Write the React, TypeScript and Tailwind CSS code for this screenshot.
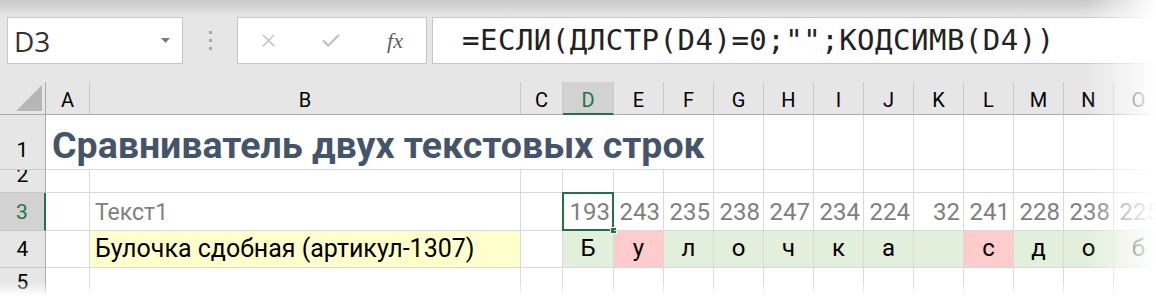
import { X, Check } from 'lucide-react'

const colHeads = [
  { l: 'A', w: 'w-[44px]' },
  { l: 'B', w: 'w-[431px]' },
  { l: 'C', w: 'w-[42px]' },
  { l: 'D', w: 'w-[51px]' },
  { l: 'E', w: 'w-[50px]' },
  { l: 'F', w: 'w-[50px]' },
  { l: 'G', w: 'w-[50px]' },
  { l: 'H', w: 'w-[50px]' },
  { l: 'I', w: 'w-[50px]' },
  { l: 'J', w: 'w-[50px]' },
  { l: 'K', w: 'w-[50px]' },
  { l: 'L', w: 'w-[50px]' },
  { l: 'M', w: 'w-[50px]' },
  { l: 'N', w: 'w-[50px]' },
  { l: 'O', w: 'w-[50px]' },
]

const codes = [193, 243, 235, 238, 247, 234, 224, 32, 241, 228, 238, 225]
const chars = ['Б', 'у', 'л', 'о', 'ч', 'к', 'а', ' ', 'с', 'д', 'о', 'б']
const bad = [1, 8]

const cell = 'shrink-0 border-r border-b border-[#d9d9d9] box-border'

function RowHead({ n, sel, h, pb }: { n: number; sel?: boolean; h: string; pb: string }) {
  return (
    <div
      className={`${h} w-[46px] shrink-0 box-border flex items-end justify-center overflow-hidden border-b border-[#c8c8c8] text-[21px] leading-none ${
        sel ? 'bg-[#d2d2d2] text-[#217346] border-r-2 border-r-[#217346]' : 'bg-[#e6e6e6] text-black border-r border-r-[#ababab]'
      }`}
    >
      <span className={pb}>{n}</span>
    </div>
  )
}

function Blank({ w, h }: { w: string; h: string }) {
  return <div className={`${cell} ${w} ${h}`} />
}

export default function App() {
  return (
    <div className="relative w-[1156px] h-[296px] overflow-hidden bg-[#e6e6e6] font-['Roboto',sans-serif]">
      {/* formula bar */}
      <div className="h-[82px] bg-gradient-to-b from-[#c9c9c9] via-[#e6e6e6] via-[20%] to-[#e6e6e6] pt-[17px] pl-[7px] flex items-start">
        <div className="w-[176px] h-[47px] bg-white border border-[#c6c6c6] flex items-center justify-between pl-[6px] pr-[12px]">
          <span className="text-[28px] text-[#333] font-['Open_Sans',sans-serif] leading-none">D3</span>
          <svg width="9" height="5" viewBox="0 0 9 5">
            <polygon points="0,0 9,0 4.5,5" fill="#7a7a7a" />
          </svg>
        </div>
        <div className="w-[54px] h-[47px] flex flex-col items-center justify-center gap-[5px]">
          <div className="w-[3px] h-[3px] bg-[#a8a8a8]" />
          <div className="w-[3px] h-[3px] bg-[#a8a8a8]" />
          <div className="w-[3px] h-[3px] bg-[#a8a8a8]" />
        </div>
        <div className="w-[190px] h-[47px] bg-white border border-[#c6c6c6] flex items-center">
          <div className="w-[60px] flex justify-center">
            <X size={21} strokeWidth={1.5} className="text-[#bdbdbd]" />
          </div>
          <div className="w-[66px] flex justify-center">
            <Check size={22} strokeWidth={2.6} className="text-[#c4c4c4]" />
          </div>
          <div className="w-[62px] flex justify-center">
            <span className="font-['Liberation_Serif',serif] italic text-[22px] text-[#5f5f5f] leading-none">fx</span>
          </div>
        </div>
        <div className="ml-[5px] flex-1 h-[47px] bg-white border border-[#c6c6c6] border-r-0 flex items-center pl-[29px]">
          <span className="font-['DejaVu_Sans_Mono',monospace] text-[29px] tracking-[0.5px] text-[#222] leading-none">
            =ЕСЛИ(ДЛСТР(D4)=0;"";КОДСИМВ(D4))
          </span>
        </div>
      </div>

      {/* sheet */}
      <div className="bg-white">
        {/* column headers */}
        <div className="flex h-[33px]">
          <div className="w-[46px] shrink-0 box-border bg-[#e6e6e6] border-r border-b border-[#ababab] flex items-end justify-end pr-[3px] pb-[3px]">
            <svg width="26" height="26" viewBox="0 0 26 26">
              <polygon points="26,0 26,26 0,26" fill="#b6b6b6" />
            </svg>
          </div>
          {colHeads.map((c) => (
            <div
              key={c.l}
              className={`${c.w} shrink-0 box-border flex items-center justify-center pt-[4px] text-[20px] leading-none border-r border-[#c8c8c8] ${
                c.l === 'D'
                  ? 'bg-[#d2d2d2] text-[#217346] border-b-2 border-b-[#217346]'
                  : 'bg-[#e6e6e6] text-black border-b border-b-[#ababab]'
              }`}
            >
              {c.l}
            </div>
          ))}
        </div>

        {/* row 1: title spills over A–F, so no gridlines there */}
        <div className="flex h-[55px]">
          <RowHead n={1} h="h-[55px]" pb="pb-[8px]" />
          <div className={`${cell} w-[668px] h-[55px] flex items-end pl-[6px] pb-[5px]`}>
            <span className="whitespace-nowrap font-bold text-[37.5px] leading-none text-[#44546a]">
              Сравниватель двух текстовых строк
            </span>
          </div>
          {colHeads.slice(6).map((c) => (
            <Blank key={c.l} w={c.w} h="h-[55px]" />
          ))}
        </div>

        {/* row 2 */}
        <div className="flex h-[23px]">
          <RowHead n={2} h="h-[23px]" pb="pb-[6px]" />
          {colHeads.map((c) => (
            <Blank key={c.l} w={c.w} h="h-[23px]" />
          ))}
        </div>

        {/* row 3 */}
        <div className="flex h-[38px]">
          <RowHead n={3} sel h="h-[38px]" pb="pb-[7px]" />
          <Blank w="w-[44px]" h="h-[38px]" />
          <div className={`${cell} w-[431px] h-[38px] flex items-end pl-[5px] pb-[6px] text-[23px] leading-none text-[#808080]`}>
            Текст1
          </div>
          <Blank w="w-[42px]" h="h-[38px]" />
          {codes.map((v, i) => (
            <div
              key={i}
              className={`${cell} relative ${i === 0 ? 'w-[51px]' : 'w-[50px]'} h-[38px] flex items-end justify-end pr-[3px] pb-[6px] text-[24px] leading-none text-[#7f7f7f]`}
            >
              {v}
              {i === 0 && (
                <>
                  <div className="absolute -left-[1px] -top-[1px] w-[52px] h-[39px] border-2 border-[#217346]" />
                  <div className="absolute -right-[4px] -bottom-[4px] w-[7px] h-[7px] bg-[#217346] border border-white" />
                </>
              )}
            </div>
          ))}
        </div>

        {/* row 4 */}
        <div className="flex h-[37px]">
          <RowHead n={4} h="h-[37px]" pb="pb-[7px]" />
          <Blank w="w-[44px]" h="h-[37px]" />
          <div className={`${cell} w-[431px] h-[37px] bg-[#ffffcc] flex items-end pl-[5px] pb-[6px] text-[25px] leading-none text-black`}>
            Булочка сдобная (артикул-1307)
          </div>
          <Blank w="w-[42px]" h="h-[37px]" />
          {chars.map((ch, i) => (
            <div
              key={i}
              className={`${cell} ${i === 0 ? 'w-[51px]' : 'w-[50px]'} h-[37px] flex items-end justify-center pb-[7px] text-[24px] leading-none text-black ${
                bad.includes(i) ? 'bg-[#ffcccc]' : 'bg-[#e2efda]'
              }`}
            >
              {ch}
            </div>
          ))}
        </div>

        {/* row 5 */}
        <div className="flex h-[40px]">
          <RowHead n={5} h="h-[40px]" pb="pb-[14px]" />
          {colHeads.map((c) => (
            <Blank key={c.l} w={c.w} h="h-[40px]" />
          ))}
        </div>
      </div>

      {/* screenshot edge fade */}
      <div className="pointer-events-none absolute right-0 top-0 h-full w-[70px] bg-gradient-to-r from-white/0 to-white" />
      <div className="pointer-events-none absolute left-0 bottom-0 w-full h-[14px] bg-gradient-to-b from-white/0 to-white" />
    </div>
  )
}
